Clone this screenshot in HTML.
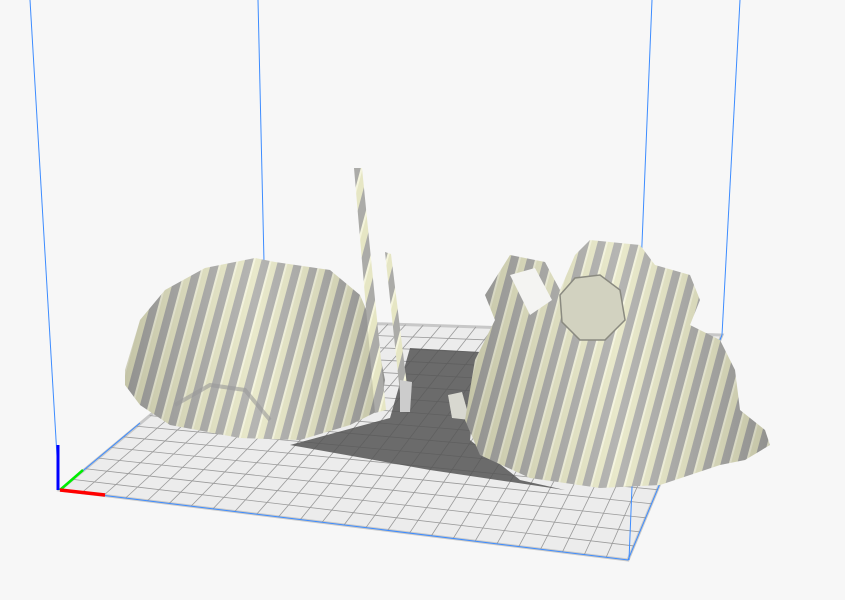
<!DOCTYPE html>
<html><head><meta charset="utf-8"><style>
html,body{margin:0;padding:0;background:#f7f7f7;width:845px;height:600px;overflow:hidden}
svg{display:block}
</style></head><body>
<svg id="s" width="845" height="600" viewBox="0 0 845 600" xmlns="http://www.w3.org/2000/svg">
<defs>
<pattern id="st" patternUnits="userSpaceOnUse" width="16" height="16" patternTransform="rotate(15)">
<rect width="16" height="16" fill="#e6e6c4"/>
<rect width="8" height="16" fill="#ababa8"/>
<rect x="8" width="2" height="16" fill="#f4f4dc"/>
</pattern>
<linearGradient id="sh" x1="0" y1="0" x2="1" y2="0">
<stop offset="0" stop-color="#000" stop-opacity="0.15"/>
<stop offset="0.5" stop-color="#fff" stop-opacity="0.12"/>
<stop offset="1" stop-color="#000" stop-opacity="0.15"/>
</linearGradient>
</defs>
<polygon points="60,490 265,320 722,335 628,560" fill="#ececec" stroke="#c8c8c8" stroke-width="3"/>
<g id="grid" stroke="#9a9a9a" stroke-width="0.8"></g>
<polygon points="290,445 390,418 410,348 480,352 470,440 520,480 565,490 430,470" fill="#555" opacity="0.85"/>
<g stroke="#3d8cff" stroke-width="1" fill="none">
<line x1="30" y1="0" x2="59" y2="490"/>
<line x1="258" y1="0" x2="264" y2="262"/>
<line x1="652" y1="0" x2="629" y2="560"/>
<line x1="740" y1="0" x2="722" y2="335"/>
<polyline points="60,490 628,560 722,335"/>
<line x1="60" y1="490" x2="140" y2="423"/>
</g>
<polygon points="125,370 140,320 165,290 205,268 255,258 275,262 330,270 360,295 375,330 385,380 380,410 350,425 300,440 240,438 170,425 140,405 125,385" fill="url(#st)"/>
<polygon points="125,370 140,320 165,290 205,268 255,258 275,262 330,270 360,295 375,330 385,380 380,410 350,425 300,440 240,438 170,425 140,405 125,385" fill="url(#sh)"/>
<polyline points="175,405 210,385 245,390 270,420" fill="none" stroke="#999" stroke-width="4" opacity="0.6"/>
<polygon points="354,168 362,168 386,410 375,413" fill="url(#st)"/>
<polygon points="385,252 391,254 410,410 402,412" fill="url(#st)"/>
<polygon points="400,380 412,382 410,412 400,412" fill="#ccc"/>
<polygon points="448,395 462,392 470,420 452,418" fill="#d8d8d0"/>
<polygon points="485,295 510,255 545,262 560,290 575,255 590,240 640,245 655,265 690,275 700,300 690,325 720,340 735,370 740,410 765,430 770,445 745,460 720,465 660,485 600,488 530,478 480,455 465,420 475,360 495,320" fill="url(#st)"/>
<polygon points="485,295 510,255 545,262 560,290 575,255 590,240 640,245 655,265 690,275 700,300 690,325 720,340 735,370 740,410 765,430 770,445 745,460 720,465 660,485 600,488 530,478 480,455 465,420 475,360 495,320" fill="url(#sh)"/>
<polygon points="560,295 575,278 600,275 620,290 625,320 605,340 580,340 562,322" fill="#d2d2c0" stroke="#8a8a80" stroke-width="1.5"/>
<polygon points="510,275 535,268 552,300 530,315" fill="#f4f4f2"/>
<line x1="58" y1="445" x2="58" y2="490" stroke="#00f" stroke-width="3"/>
<line x1="60" y1="490" x2="83" y2="470" stroke="#0e0" stroke-width="2.5"/>
<line x1="60" y1="490" x2="105" y2="495" stroke="#f00" stroke-width="3.5"/>
</svg>
<script>
var g=document.getElementById('grid');
var A=[60,490],B=[628,560],C=[722,335],D=[265,320];
function L(p,q,t){return [p[0]+(q[0]-p[0])*t,p[1]+(q[1]-p[1])*t];}
var NU=26,NV=16,s='';
for(var i=1;i<NU;i++){var t=i/NU,p=L(A,B,t),q=L(D,C,t);s+='<line x1="'+p[0]+'" y1="'+p[1]+'" x2="'+q[0]+'" y2="'+q[1]+'"/>';}
for(var j=1;j<NV;j++){var t=j/NV,p=L(A,D,t),q=L(B,C,t);s+='<line x1="'+p[0]+'" y1="'+p[1]+'" x2="'+q[0]+'" y2="'+q[1]+'"/>';}
g.innerHTML=s;
</script>
</body></html>
